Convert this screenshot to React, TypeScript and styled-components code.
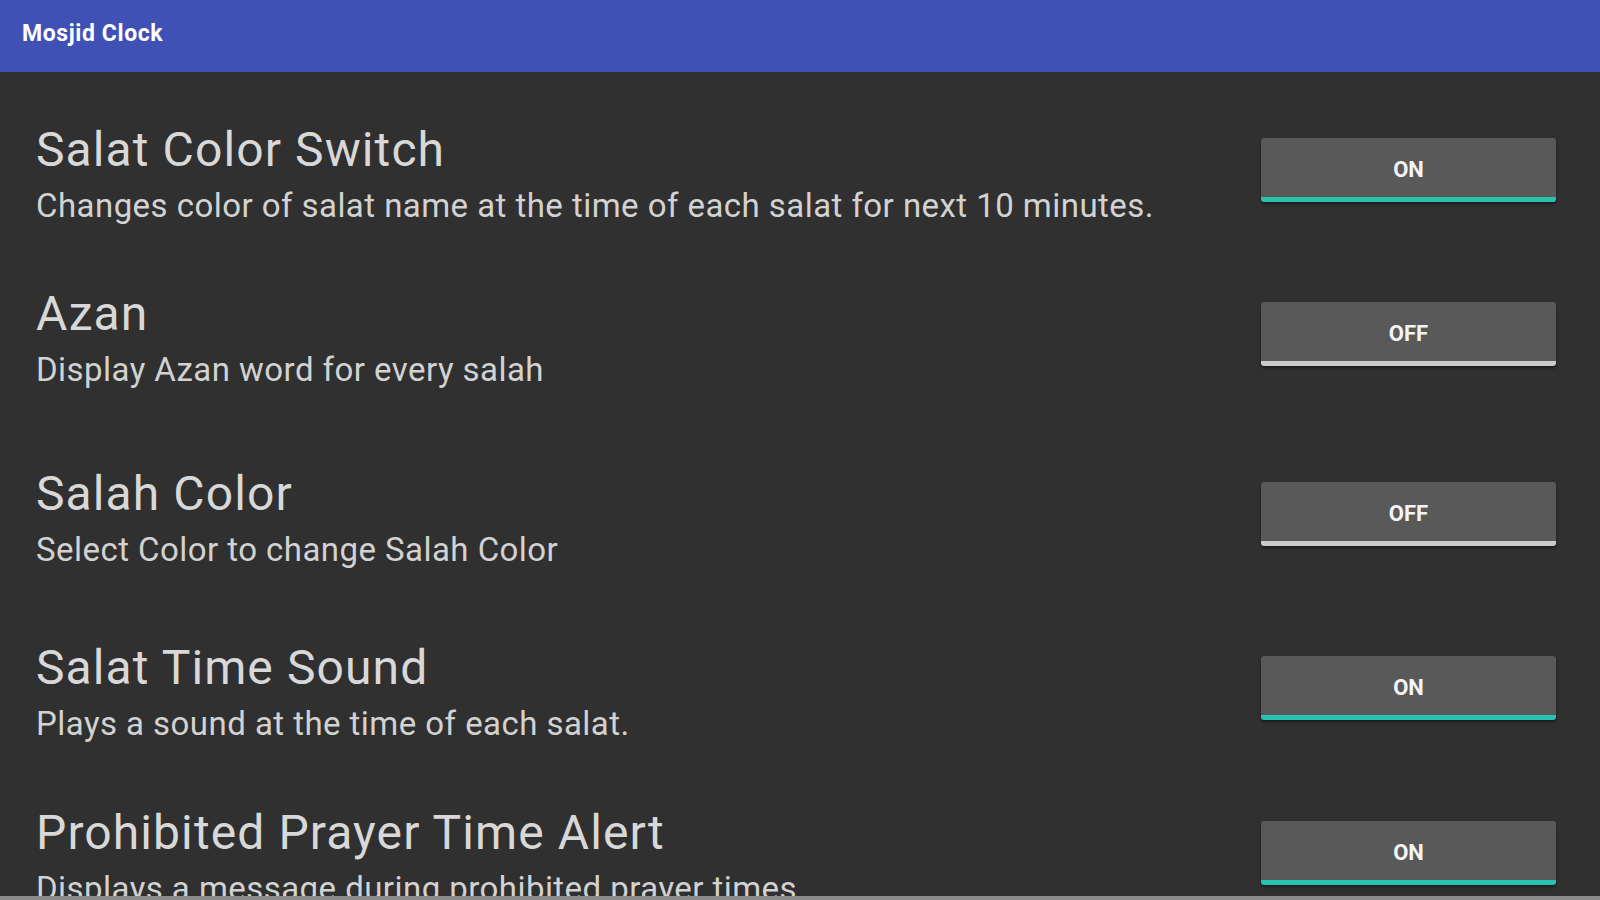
import React from 'react'
import styled, { createGlobalStyle } from 'styled-components'

const GlobalStyle = createGlobalStyle`
  html, body {
    margin: 0;
    padding: 0;
    background: #303030;
    overflow: hidden;
  }
  * { box-sizing: border-box; }
`

const Screen = styled.div`
  width: 100vw;
  height: 100vh;
  display: flex;
  flex-direction: column;
  background: #303030;
  font-family: Roboto, "Liberation Sans", sans-serif;
`

const AppBar = styled.header`
  height: 72px;
  flex: none;
  background: #3f51b5;
  display: flex;
  align-items: flex-start;
  padding: 20px 0 0 22px;
  color: #ffffff;
  font-size: 23px;
  font-weight: 700;
  letter-spacing: 0.6px;
`

const List = styled.main`
  flex: 1;
  overflow: hidden;
  padding: 50px 44px 0 36px;
`

const BottomEdge = styled.div`
  height: 4px;
  flex: none;
  background: #8c8c8c;
`

const Row = styled.section<{ $space: number }>`
  display: flex;
  align-items: flex-start;
  justify-content: space-between;
  margin-bottom: ${p => p.$space}px;
`

const TextBlock = styled.div`
  display: flex;
  flex-direction: column;
`

const Title = styled.h2`
  margin: 0;
  font-size: 48px;
  font-weight: 400;
  letter-spacing: 1.1px;
  line-height: 56px;
  color: #d8d8d8;
  white-space: nowrap;
`

const Description = styled.p`
  margin: 0;
  font-size: 33px;
  font-weight: 400;
  letter-spacing: 0.45px;
  line-height: 56px;
  color: #d2d2d2;
  white-space: nowrap;
`

const Toggle = styled.button<{ $on: boolean }>`
  flex: none;
  width: 295px;
  height: 64px;
  margin-top: 16px;
  border: none;
  border-radius: 3px;
  background: #595959;
  border-bottom: 5px solid ${p => (p.$on ? '#26c2ae' : '#cbcbcb')};
  box-shadow: 0 2px 3px rgba(0, 0, 0, 0.45);
  color: #f4f4f4;
  font-family: Roboto, "Liberation Sans", sans-serif;
  font-size: 22px;
  font-weight: 700;
  padding: 4px 0 0 0;
  cursor: pointer;
`

const settings = [
  { title: 'Salat Color Switch', desc: 'Changes color of salat name at the time of each salat for next 10 minutes.', on: true, space: 52 },
  { title: 'Azan', desc: 'Display Azan word for every salah', on: false, space: 68 },
  { title: 'Salah Color', desc: 'Select Color to change Salah Color', on: false, space: 62 },
  { title: 'Salat Time Sound', desc: 'Plays a sound at the time of each salat.', on: true, space: 53 },
  { title: 'Prohibited Prayer Time Alert', desc: 'Displays a message during prohibited prayer times', on: true, space: 0 },
]

export default function App() {
  return (
    <>
      <GlobalStyle />
      <Screen>
        <AppBar>Mosjid Clock</AppBar>
        <List>
          {settings.map(s => (
            <Row key={s.title} $space={s.space}>
              <TextBlock>
                <Title>{s.title}</Title>
                <Description>{s.desc}</Description>
              </TextBlock>
              <Toggle $on={s.on}>{s.on ? 'ON' : 'OFF'}</Toggle>
            </Row>
          ))}
        </List>
        <BottomEdge />
      </Screen>
    </>
  )
}
